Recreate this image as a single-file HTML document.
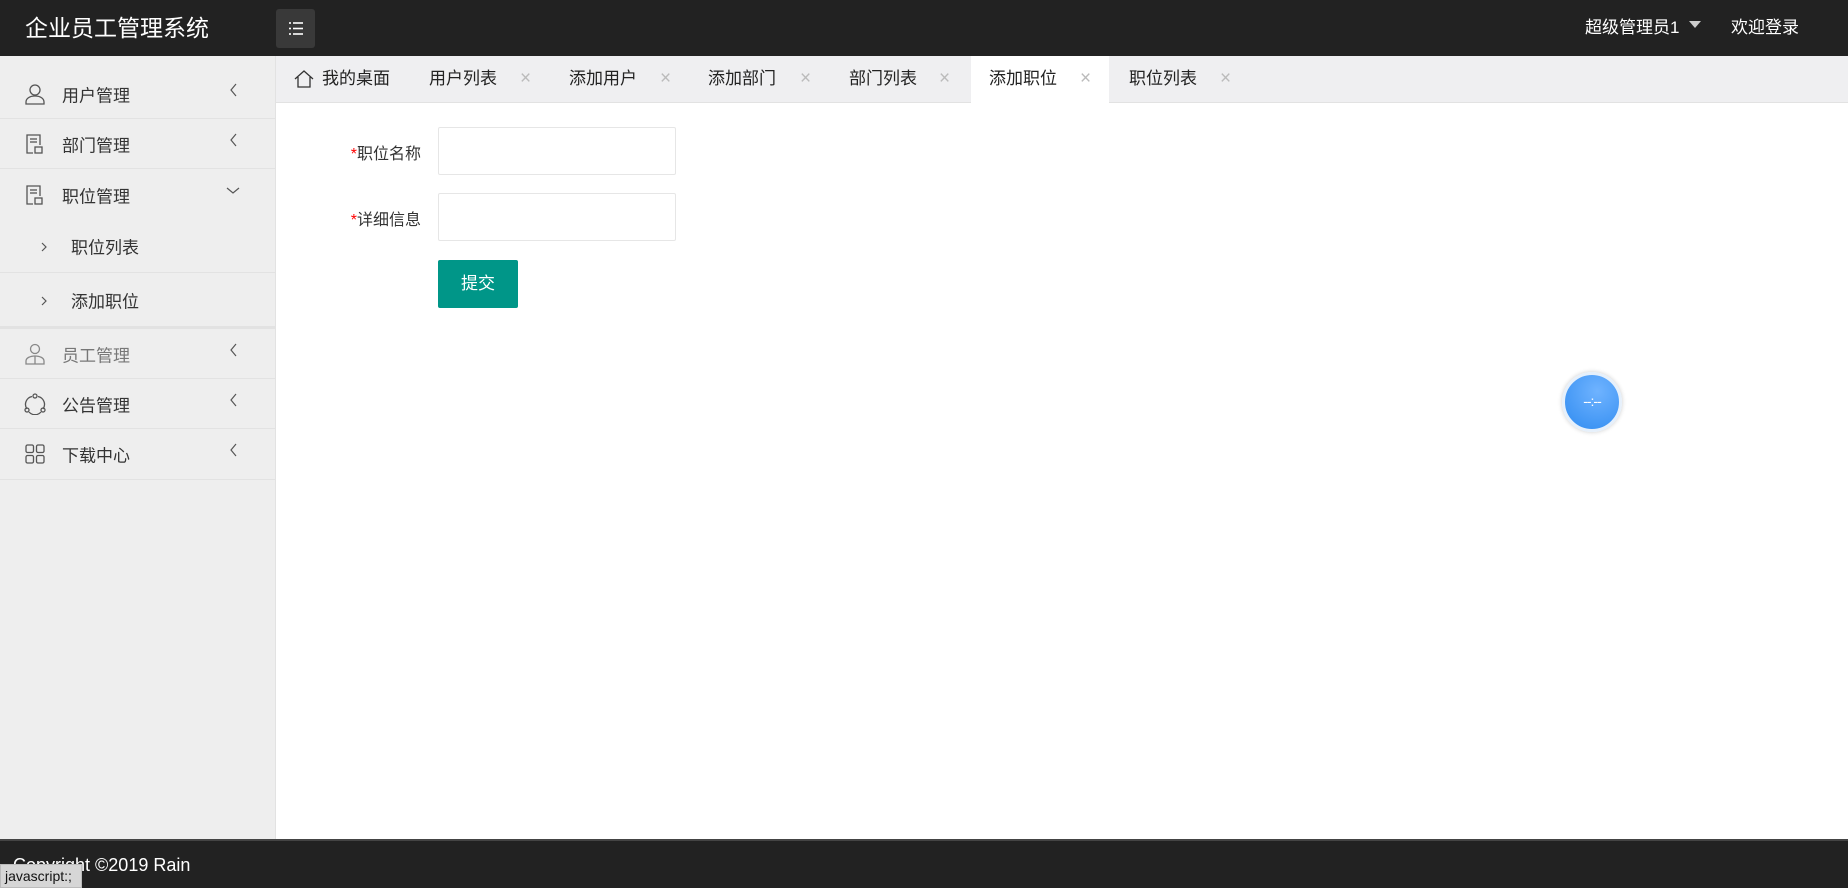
<!DOCTYPE html>
<html><head><meta charset="utf-8"><style>
*{margin:0;padding:0;box-sizing:border-box}
body{width:1848px;height:888px;overflow:hidden;background:#fff;font-family:"Liberation Sans","Noto Sans CJK SC",sans-serif;position:relative;color:#333}
.hd{position:absolute;left:0;top:0;width:1848px;height:56px;background:#222}
.logo{position:absolute;left:25px;top:9px;color:#fff;font-size:23px}
.mbtn{position:absolute;left:276px;top:9px;width:39px;height:39px;background:#393939;border-radius:3px}
.hr{position:absolute;top:13px;color:#fff;font-size:17px}
.tri{position:absolute;left:1689px;top:21px;width:0;height:0;border-left:6px solid transparent;border-right:6px solid transparent;border-top:7px solid #ccc}
.side{position:absolute;left:0;top:56px;width:276px;height:783px;background:#eee;border-right:1px solid #e2e2e2}
.it{position:absolute;left:0;width:275px;border-bottom:1px solid #e2e2e2;font-size:17px;color:#333}
.it span.t{position:absolute;left:62px;top:50%;transform:translateY(-50%)}
.it svg.ic{position:absolute;left:24px;top:50%;transform:translateY(-50%)}
.ar{position:absolute;left:228px;top:50%;margin-top:-12px}
.sub span.t{left:71px}
.sub .gt{position:absolute;left:40px;top:50%;margin-top:-5px}
.tabs{position:absolute;left:276px;top:56px;width:1572px;height:47px;background:#efeff1;border-bottom:1px solid #e2e2e2}
.tab{position:absolute;top:0;height:46px;line-height:46px;font-size:17px;color:#222}
.x{position:absolute;top:0;line-height:46px;font-size:19px;color:#bbb}
.act{position:absolute;left:695px;top:0;width:138px;height:47px;background:#fff}
.lb{position:absolute;width:150px;text-align:right;left:271px;font-size:16px;color:#333}
.lb b{color:#f00;font-weight:normal}
.in{position:absolute;left:438px;width:238px;height:48px;border:1px solid #e6e6e6;border-radius:2px;background:#fff}
.btn{position:absolute;left:438px;top:260px;width:80px;height:48px;background:#009688;color:#fff;font-size:17px;text-align:center;line-height:48px;border-radius:2px}
.ft{position:absolute;left:0;top:839px;width:1848px;height:49px;background:#222;border-top:2px solid #444}
.ft span{position:absolute;left:13px;top:14px;color:#fff;font-size:18px}
.st{position:absolute;left:0;top:864px;width:82px;height:24px;background:#d6d6d6;border:1px solid #bbb;font-size:14px;color:#111;line-height:22px;padding-left:4px}
.circ{position:absolute;left:1562px;top:372px;width:60px;height:60px;border-radius:50%;background:radial-gradient(circle at 60% 30%,#6fb3ff,#2f8bf0);border:3px solid #e6f0fb;box-shadow:0 0 5px rgba(0,0,0,.2);color:#fff;font-size:14px;text-align:center;line-height:52px;letter-spacing:-1px}
</style></head><body>
<div class="hd">
<div class="logo">企业员工管理系统</div>
<div class="mbtn"><svg width="39" height="39"><g stroke="#fff" stroke-width="1.6"><line x1="13" y1="14" x2="15" y2="14"/><line x1="17" y1="14" x2="27" y2="14"/><line x1="13" y1="19.5" x2="15" y2="19.5"/><line x1="17" y1="19.5" x2="27" y2="19.5"/><line x1="13" y1="25" x2="15" y2="25"/><line x1="17" y1="25" x2="27" y2="25"/></g></svg></div>
<div class="hr" style="left:1585px">超级管理员1</div><div class="tri"></div>
<div class="hr" style="left:1731px">欢迎登录</div>
</div>
<div class="side">
<div class="it" style="top:13px;height:50px"><svg class="ic" width="22" height="22" viewBox="0 0 22 22" fill="none" stroke="#555" stroke-width="1.3"><circle cx="11" cy="7" r="5"/><path d="M2 21v-2c0-3 3-6 9-6s9 3 9 6v2z"/></svg><span class="t">用户管理</span><svg class="ar" width="12" height="16"><path d="M8 2L3 8l5 6" fill="none" stroke="#555" stroke-width="1.2"/></svg></div>
<div class="it" style="top:63px;height:50px"><svg class="ic" width="22" height="22" viewBox="0 0 22 22" fill="none" stroke="#555" stroke-width="1.3"><path d="M9 20H3V2h13v10"/><line x1="6" y1="6" x2="13" y2="6"/><line x1="6" y1="9" x2="13" y2="9"/><rect x="11" y="14" width="7" height="6"/></svg><span class="t">部门管理</span><svg class="ar" width="12" height="16"><path d="M8 2L3 8l5 6" fill="none" stroke="#555" stroke-width="1.2"/></svg></div>
<div class="it" style="top:113px;height:51px;border-bottom:none"><svg class="ic" width="22" height="22" viewBox="0 0 22 22" fill="none" stroke="#555" stroke-width="1.3"><path d="M9 20H3V2h13v10"/><line x1="6" y1="6" x2="13" y2="6"/><line x1="6" y1="9" x2="13" y2="9"/><rect x="11" y="14" width="7" height="6"/></svg><span class="t">职位管理</span><svg class="ar" style="left:225px" width="16" height="16"><path d="M2 5l6 5 6-5" fill="none" stroke="#555" stroke-width="1.2"/></svg></div>
<div class="it sub" style="top:164px;height:53px"><svg class="gt" width="8" height="12"><path d="M2 2l4 4-4 4" fill="none" stroke="#555" stroke-width="1.2"/></svg><span class="t">职位列表</span></div>
<div class="it sub" style="top:217px;height:56px;border-bottom:3px solid #e2e2e2"><svg class="gt" width="8" height="12"><path d="M2 2l4 4-4 4" fill="none" stroke="#555" stroke-width="1.2"/></svg><span class="t">添加职位</span></div>
<div class="it" style="top:273px;height:50px;color:#777"><svg class="ic" width="22" height="22" viewBox="0 0 22 22" fill="none" stroke="#888" stroke-width="1.3"><circle cx="11" cy="6" r="4.5"/><path d="M2 21v-3c0-3 4-5 9-5s9 2 9 5v3z"/><path d="M11 13v8"/></svg><span class="t">员工管理</span><svg class="ar" width="12" height="16"><path d="M8 2L3 8l5 6" fill="none" stroke="#555" stroke-width="1.2"/></svg></div>
<div class="it" style="top:323px;height:50px"><svg class="ic" width="22" height="22" viewBox="0 0 22 22" fill="none" stroke="#555" stroke-width="1.3"><path d="M8 3.5A8 8 0 0 0 3 16M19 16A8 8 0 0 0 14 3.5M5 19a8 8 0 0 0 12 0"/><circle cx="11" cy="3" r="2"/><circle cx="3" cy="17" r="2"/><circle cx="19" cy="17" r="2"/></svg><span class="t">公告管理</span><svg class="ar" width="12" height="16"><path d="M8 2L3 8l5 6" fill="none" stroke="#555" stroke-width="1.2"/></svg></div>
<div class="it" style="top:373px;height:51px"><svg class="ic" width="22" height="22" viewBox="0 0 22 22" fill="none" stroke="#555" stroke-width="1.3"><rect x="2" y="2" width="7.5" height="7.5" rx="1.5"/><rect x="12.5" y="2" width="7.5" height="7.5" rx="1.5"/><rect x="2" y="12.5" width="7.5" height="7.5" rx="1.5"/><rect x="12.5" y="12.5" width="7.5" height="7.5" rx="1.5"/></svg><span class="t">下载中心</span><svg class="ar" width="12" height="16"><path d="M8 2L3 8l5 6" fill="none" stroke="#555" stroke-width="1.2"/></svg></div>
</div>
<div class="tabs">
<div class="act"></div>
<svg style="position:absolute;left:18px;top:13px" width="20" height="20" viewBox="0 0 20 20" fill="none" stroke="#333" stroke-width="1.3"><path d="M1 10L10 2l9 8M4 8v10h12V8"/></svg>
<div class="tab" style="left:46px">我的桌面</div>
<div class="tab" style="left:153px">用户列表</div><div class="x" style="left:244px">×</div>
<div class="tab" style="left:293px">添加用户</div><div class="x" style="left:384px">×</div>
<div class="tab" style="left:432px">添加部门</div><div class="x" style="left:524px">×</div>
<div class="tab" style="left:573px">部门列表</div><div class="x" style="left:663px">×</div>
<div class="tab" style="left:713px">添加职位</div><div class="x" style="left:804px">×</div>
<div class="tab" style="left:853px">职位列表</div><div class="x" style="left:944px">×</div>
</div>
<div class="lb" style="top:140px"><b>*</b>职位名称</div>
<div class="in" style="top:127px"></div>
<div class="lb" style="top:206px"><b>*</b>详细信息</div>
<div class="in" style="top:193px"></div>
<div class="btn">提交</div>
<div class="circ">--:--</div>
<div class="ft"><span>Copyright ©2019 Rain</span></div>
<div class="st">javascript:;</div>
</body></html>
